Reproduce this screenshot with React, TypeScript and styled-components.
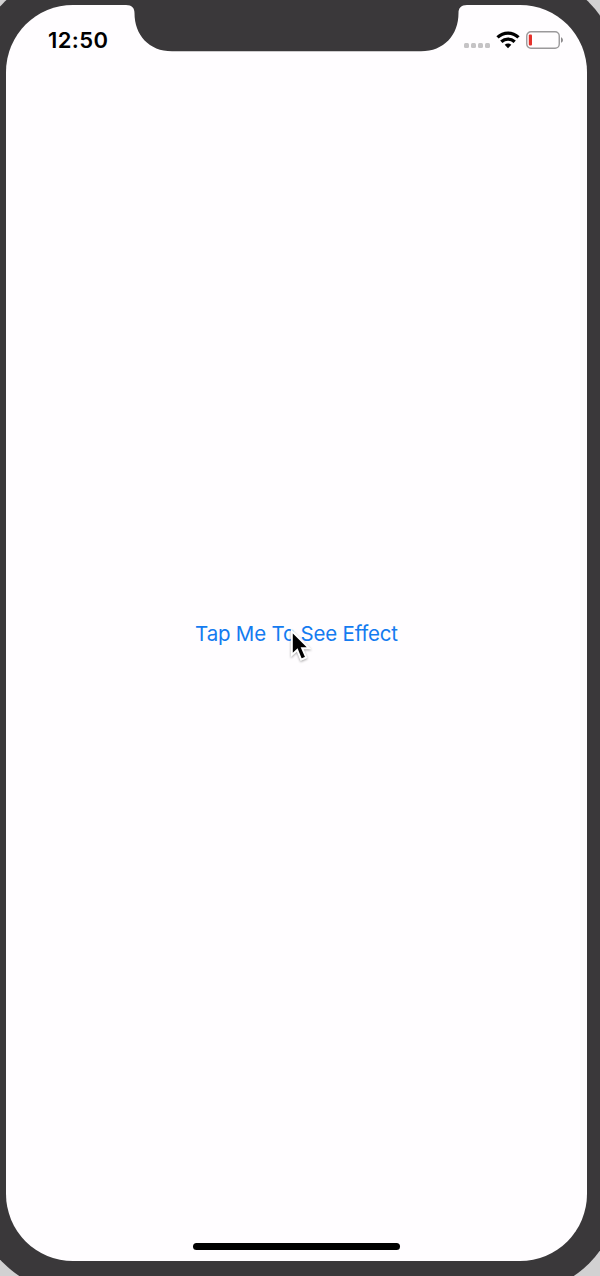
import React from "react";
import styled, { createGlobalStyle } from "styled-components";

const GlobalStyle = createGlobalStyle`
  * { box-sizing: border-box; }
  body { margin: 0; background: #d2d1d2; }
`;

const Desktop = styled.main`
  width: 600px;
  height: 1276px;
  overflow: hidden;
  background: #d2d1d2;
  font-family: Inter, "Liberation Sans", sans-serif;
`;

const DeviceFrame = styled.div`
  width: 643px;
  height: 1318px;
  margin: -26px 0 0 -25px;
  padding: 31px;
  border-radius: 98px;
  background: #3a383a;
`;

const Screen = styled.section`
  position: relative;
  width: 581px;
  height: 1256px;
  border-radius: 67px;
  background: #fffdff;
  display: flex;
  flex-direction: column;
  align-items: center;
`;

const Notch = styled.svg`
  position: absolute;
  top: -1px;
  left: 118px;
`;

const StatusBar = styled.header`
  width: 100%;
  height: 70px;
  padding: 0 23px 0 42px;
  display: flex;
  justify-content: space-between;
  align-items: center;
`;

const Clock = styled.time`
  font-size: 22px;
  line-height: 28px;
  font-weight: 600;
  letter-spacing: 0.4px;
  color: #000;
`;

const Indicators = styled.div`
  display: flex;
  align-items: center;
`;

const SignalDots = styled.div`
  display: flex;
  gap: 2px;
  margin: 11px 6px 0 0;
`;

const Dot = styled.i`
  width: 5px;
  height: 5px;
  border-radius: 1.5px;
  background: #c5c3c5;
`;

const Wifi = styled.svg`
  margin-right: 6px;
`;

const Content = styled.div`
  flex: 1;
  display: flex;
  justify-content: center;
  padding-top: 544px;
`;

const TapButton = styled.button`
  height: 30px;
  padding: 0;
  border: 0;
  background: none;
  color: #147bf0;
  font: 400 20.5px/30px Inter, "Liberation Sans", sans-serif;
  letter-spacing: -0.2px;
  white-space: nowrap;
`;

const Pointer = styled.svg`
  position: absolute;
  left: 283px;
  top: 623px;
  filter: drop-shadow(0 1px 1px rgba(0, 0, 0, 0.35));
`;

const HomeIndicator = styled.div`
  width: 207px;
  height: 7px;
  margin-bottom: 11px;
  border-radius: 4px;
  background: #000;
`;

export default function App() {
  return (
    <>
      <GlobalStyle />
      <Desktop>
        <DeviceFrame>
          <Screen>
            <Notch width="345" height="48" viewBox="0 0 345 48" aria-hidden="true">
              <path
                d="M0 0H345V1H343C337 1 334.500 4 334.500 9C334.500 31 320 47.300 297 47.300H48C25 47.300 10.500 31 10.500 9C10.500 4 8 1 2 1H0Z"
                fill="#3a383a"
              />
            </Notch>
            <StatusBar>
              <Clock>12:50</Clock>
              <Indicators>
                <SignalDots>
                  <Dot />
                  <Dot />
                  <Dot />
                  <Dot />
                </SignalDots>
                <Wifi width="24" height="18" viewBox="0 0 24 18" aria-hidden="true">
                  <g fill="none" stroke="#000" strokeWidth="3.300">
                    <path d="M1.500 6.400C7.500 .7 16.500 .7 22.500 6.400" />
                    <path d="M5.300 10.800C9.200 7.200 14.800 7.200 18.700 10.800" />
                  </g>
                  <path d="M8.700 13.800C10.600 12 13.400 12 15.300 13.800L12 17.200Z" />
                </Wifi>
                <svg width="38" height="18" viewBox="0 0 38 18" aria-hidden="true">
                  <rect x=".75" y=".75" width="32.500" height="16.500" rx="4.200" fill="none" stroke="#9b999b" strokeWidth="1.400" />
                  <rect x="2.800" y="3.500" width="3.200" height="11" rx="1" fill="#e5302b" />
                  <path d="M35 6.200C37.600 7.200 37.600 10.800 35 11.800Z" fill="#8d8b8d" />
                </svg>
              </Indicators>
            </StatusBar>
            <Content>
              <TapButton type="button">Tap Me To See Effect</TapButton>
            </Content>
            <HomeIndicator />
            <Pointer width="26" height="38" viewBox="0 0 26 38" aria-hidden="true">
              <path
                d="M2.800 3V27L8.200 21.900L12.100 31.600L17.200 29.400L13.200 20.300H20.200Z"
                fill="#000"
                stroke="#fff"
                strokeWidth="2"
              />
            </Pointer>
          </Screen>
        </DeviceFrame>
      </Desktop>
    </>
  );
}
